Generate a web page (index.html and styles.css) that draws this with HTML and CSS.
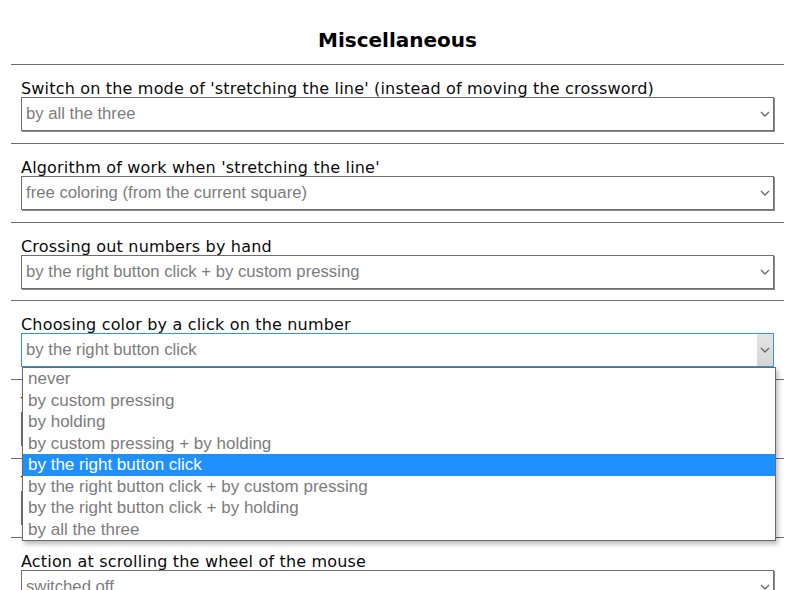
FILE: index.html
```html
<!DOCTYPE html>
<html lang="en">
<head>
<meta charset="utf-8">
<title>Miscellaneous</title>
<link rel="stylesheet" href="styles.css">
</head>
<body>
<div class="page">
  <h2 class="title">Miscellaneous</h2>

  <section class="opt">
    <div class="label">Switch on the mode of 'stretching the line' (instead of moving the crossword)</div>
    <div class="select"><span class="value">by all the three</span><span class="arrow"><svg width="10" height="6" viewBox="0 0 10 6"><path d="M1 1 L5 5 L9 1" fill="none" stroke="#6a6a6a" stroke-width="1.4"/></svg></span></div>
  </section>

  <section class="opt">
    <div class="label">Algorithm of work when 'stretching the line'</div>
    <div class="select"><span class="value">free coloring (from the current square)</span><span class="arrow"><svg width="10" height="6" viewBox="0 0 10 6"><path d="M1 1 L5 5 L9 1" fill="none" stroke="#6a6a6a" stroke-width="1.4"/></svg></span></div>
  </section>

  <section class="opt">
    <div class="label">Crossing out numbers by hand</div>
    <div class="select"><span class="value">by the right button click + by custom pressing</span><span class="arrow"><svg width="10" height="6" viewBox="0 0 10 6"><path d="M1 1 L5 5 L9 1" fill="none" stroke="#6a6a6a" stroke-width="1.4"/></svg></span></div>
  </section>

  <section class="opt">
    <div class="label">Choosing color by a click on the number</div>
    <div class="select focused"><span class="value">by the right button click</span><span class="arrow hover"><svg width="10" height="6" viewBox="0 0 10 6"><path d="M1 1 L5 5 L9 1" fill="none" stroke="#6a6a6a" stroke-width="1.4"/></svg></span>
      <ul class="dropdown">
        <li>never</li>
        <li>by custom pressing</li>
        <li>by holding</li>
        <li>by custom pressing + by holding</li>
        <li class="selected">by the right button click</li>
        <li>by the right button click + by custom pressing</li>
        <li>by the right button click + by holding</li>
        <li>by all the three</li>
      </ul>
    </div>
  </section>

  <section class="opt">
    <div class="label">The highlighting of the line under the cursor</div>
    <div class="select"><span class="value">switched off</span><span class="arrow"><svg width="10" height="6" viewBox="0 0 10 6"><path d="M1 1 L5 5 L9 1" fill="none" stroke="#6a6a6a" stroke-width="1.4"/></svg></span></div>
  </section>

  <section class="opt">
    <div class="label">The counter of the painted squares</div>
    <div class="select"><span class="value">switched off</span><span class="arrow"><svg width="10" height="6" viewBox="0 0 10 6"><path d="M1 1 L5 5 L9 1" fill="none" stroke="#6a6a6a" stroke-width="1.4"/></svg></span></div>
  </section>

  <section class="opt">
    <div class="label">Action at scrolling the wheel of the mouse</div>
    <div class="select"><span class="value">switched off</span><span class="arrow"><svg width="10" height="6" viewBox="0 0 10 6"><path d="M1 1 L5 5 L9 1" fill="none" stroke="#6a6a6a" stroke-width="1.4"/></svg></span></div>
  </section>
</div>
</body>
</html>
```
FILE: styles.css
```css
html, body {
  margin: 0;
  padding: 0;
  background: #ffffff;
}
body {
  font-family: "DejaVu Sans", Verdana, sans-serif;
  color: #000;
  overflow: hidden;
}
.page {
  width: 773px;
  margin-left: 11px;
}
.title {
  margin: 0;
  padding-top: 28px;
  height: 36px;
  text-align: center;
  font-size: 20px;
  line-height: 24px;
  font-weight: bold;
  color: #000;
}
.opt {
  border-top: 1px solid #6e6e6e;
  padding: 12px 10px 11.8px 10px;
}
.label {
  font-size: 16px;
  letter-spacing: 0.18px;
  line-height: 24px;
  height: 20px;
  white-space: nowrap;
  color: #0a0a0a;
}
.select {
  position: relative;
  height: 32px;
  border: 1px solid #6f6f6f;
  box-shadow: 1px 1px 0 #8a8a8a;
  display: flex;
  align-items: center;
  font-family: "Liberation Sans", Arial, sans-serif;
  font-size: 16.7px;
  color: #7c7c7c;
}
.select.focused {
  border-color: #2f9bd6;
  box-shadow: none;
}
.value {
  flex: 1;
  padding-left: 4px;
  white-space: nowrap;
}
.arrow {
  width: 16px;
  height: 100%;
  display: flex;
  align-items: center;
  justify-content: center;
  margin-right: 0;
}
.arrow svg {
  display: block;
}
.arrow.hover {
  background: linear-gradient(#e4e4e4, #d6d6d6);
}
.dropdown {
  position: absolute;
  top: 100%;
  left: 0;
  width: 752px;
  margin: 1px 0 0 0;
  padding: 0;
  list-style: none;
  background: #fff;
  border: 1px solid #6a6a6a;
  box-shadow: 2px 3px 5px rgba(0, 0, 0, 0.28);
  z-index: 10;
  font-size: 17px;
}
.dropdown li {
  height: 21.5px;
  line-height: 21px;
  padding-left: 5px;
  color: #7c7c7c;
  white-space: nowrap;
}
.dropdown li.selected {
  background: #1e90ff;
  color: #fff;
}
```
